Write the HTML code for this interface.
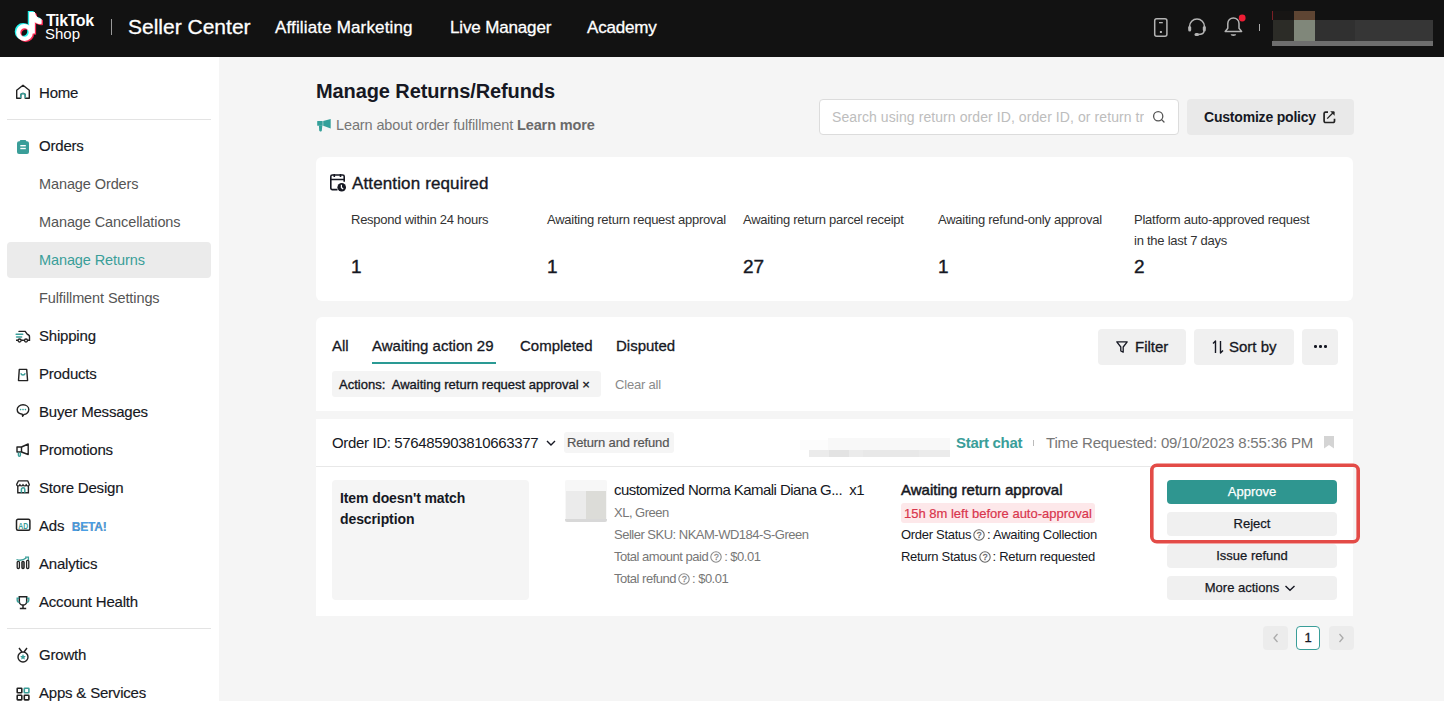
<!DOCTYPE html>
<html><head><meta charset="utf-8">
<style>
*{box-sizing:border-box;margin:0;padding:0}
html,body{width:1444px;height:701px;overflow:hidden;font-family:"Liberation Sans",sans-serif;background:#f5f5f5;color:#161823}
.a{position:absolute;white-space:nowrap}
svg{display:block}
#hdr{position:absolute;left:0;top:0;width:1444px;height:57px;background:#121212}
.nav{position:absolute;white-space:nowrap;color:#fff;font-size:17px;top:18px;-webkit-text-stroke:0.3px #fff}
#side{position:absolute;left:0;top:57px;width:219px;height:644px;background:#fff}
.si{position:absolute;left:39px;font-size:15px;color:#161823;white-space:nowrap;letter-spacing:-0.2px;-webkit-text-stroke:0.15px #161823}
.ss{position:absolute;left:39px;font-size:14.5px;color:#555;white-space:nowrap;letter-spacing:-0.1px}
.ic{position:absolute;left:15px}
.card{position:absolute;background:#fff}
.btn{position:absolute;background:#f0f0f0;border-radius:4px;font-size:13px;text-align:center;color:#161823;white-space:nowrap;-webkit-text-stroke:0.25px #161823}
.lab{position:absolute;font-size:13px;color:#333;white-space:nowrap;line-height:21px;letter-spacing:-0.25px}
.num{position:absolute;font-size:19px;color:#161823;white-space:nowrap;-webkit-text-stroke:0.4px #161823}
.tab{position:absolute;font-size:15px;color:#161823;white-space:nowrap;top:337px;-webkit-text-stroke:0.3px #161823}
.hq{display:inline-block;vertical-align:-2px;margin:0 2px 0 2px}
</style></head>
<body>
<!-- HEADER -->
<div id="hdr">
  <svg class="a" style="left:10px;top:8.7px" width="36" height="38" viewBox="10 8 36 38">
    
    <g fill="#25f4ee" stroke="#25f4ee" transform="translate(-1.4,-1)">
        <circle cx="24.5" cy="31.5" r="6.3" fill="none" stroke-width="4.2"/>
        <rect x="29.7" y="11.5" width="4.6" height="20.5"/>
        <path d="M33.5 11.5h1c0.5 3.6 3.2 6.3 6.6 6.6v4.6c-2.8 0-5.2-0.9-7.2-2.4z"/>
      </g>
    <g fill="#fe2c55" stroke="#fe2c55" transform="translate(1.3,1.1)">
        <circle cx="24.5" cy="31.5" r="6.3" fill="none" stroke-width="4.2"/>
        <rect x="29.7" y="11.5" width="4.6" height="20.5"/>
        <path d="M33.5 11.5h1c0.5 3.6 3.2 6.3 6.6 6.6v4.6c-2.8 0-5.2-0.9-7.2-2.4z"/>
      </g>
    <g fill="#fff" stroke="#fff">
        <circle cx="24.5" cy="31.5" r="6.3" fill="none" stroke-width="4.2"/>
        <rect x="29.7" y="11.5" width="4.6" height="20.5"/>
        <path d="M33.5 11.5h1c0.5 3.6 3.2 6.3 6.6 6.6v4.6c-2.8 0-5.2-0.9-7.2-2.4z"/>
      </g>
  </svg>
  <div class="a" style="left:46px;top:12px;color:#fff;font-size:16px;font-weight:bold;letter-spacing:-0.4px">TikTok</div>
  <div class="a" style="left:45px;top:25px;color:#fff;font-size:15px">Shop</div>
  <div class="a" style="left:111px;top:19px;width:1px;height:16px;background:#999"></div>
  <div class="a" style="left:128px;top:15px;color:#fff;font-size:21px;-webkit-text-stroke:0.3px #fff">Seller Center</div>
  <div class="nav" style="left:275px;letter-spacing:0.15px">Affiliate Marketing</div>
  <div class="nav" style="left:450px;letter-spacing:-0.15px">Live Manager</div>
  <div class="nav" style="left:587px;letter-spacing:-0.2px">Academy</div>
  <!-- right icons -->
  <svg class="a" style="left:1152px;top:17px" width="18" height="22" viewBox="0 0 18 22">
    <rect x="2.7" y="1.7" width="12.2" height="17.6" rx="2" fill="none" stroke="#b4b4b4" stroke-width="1.5"/>
    <rect x="7" y="5" width="3.8" height="1.3" fill="#b4b4b4"/>
    <rect x="7.9" y="14" width="2" height="2" fill="#b4b4b4"/>
  </svg>
  <svg class="a" style="left:1186px;top:17px" width="22" height="20" viewBox="0 0 22 20">
    <path d="M3.5 12V9.5a7.5 7.5 0 0 1 15 0V12" fill="none" stroke="#b4b4b4" stroke-width="1.5"/>
    <rect x="2.2" y="9" width="3" height="5.5" rx="1.5" fill="#b4b4b4"/>
    <rect x="16.8" y="9" width="3" height="5.5" rx="1.5" fill="#b4b4b4"/>
    <path d="M18 14c0 2.6-2.5 3.5-6 3.5" fill="none" stroke="#b4b4b4" stroke-width="1.5"/>
    <rect x="8.5" y="16" width="4.5" height="3" rx="1.5" fill="#b4b4b4"/>
  </svg>
  <svg class="a" style="left:1222px;top:12px" width="26" height="26" viewBox="0 0 26 26">
    <path d="M3.2 19.5h16.4l-2.6-3.2V11.5a5.6 5.6 0 0 0-11.2 0v4.8z" fill="none" stroke="#b4b4b4" stroke-width="1.5" stroke-linejoin="round"/>
    <path d="M8.6 22.3h5.6a2.8 1.6 0 0 1-5.6 0z" fill="#b4b4b4"/>
    <circle cx="20.2" cy="6" r="3.4" fill="#ee1d34"/>
  </svg>
  <div class="a" style="left:1259px;top:24px;width:1px;height:7px;background:#aaa"></div>
  <!-- blurred profile -->
  <div class="a" style="left:1272px;top:11px;width:1px;height:9px;background:#7a1f25"></div>
  <div class="a" style="left:1273px;top:11px;width:21px;height:9px;background:#171514"></div>
  <div class="a" style="left:1294px;top:11px;width:21px;height:9px;background:#5e4533"></div>
  <div class="a" style="left:1273px;top:20px;width:21px;height:21px;background:#2c2c27"></div>
  <div class="a" style="left:1294px;top:20px;width:21px;height:21px;background:#80877a"></div>
  <div class="a" style="left:1315px;top:20px;width:40px;height:21px;background:#303030"></div>
  <div class="a" style="left:1355px;top:20px;width:78px;height:21px;background:#363636"></div>
  <div class="a" style="left:1272px;top:41px;width:161px;height:5px;background:#6e6e6e"></div>
</div>

<!-- SIDEBAR -->
<div id="side"></div>
<div class="a" style="left:7px;top:119px;width:204px;height:1px;background:#e3e3e3"></div>
<div class="a" style="left:7px;top:628px;width:204px;height:1px;background:#e3e3e3"></div>
<div class="a" style="left:7px;top:242px;width:204px;height:36px;background:#ebebeb;border-radius:4px"></div>

<!-- icons -->
<svg class="ic" style="top:84px" width="16" height="16" viewBox="0 0 16 16">
  <path d="M1.7 14.3V6.3L8 1.2l6.3 5.1v8H10.3v-2.6a2.3 2.3 0 0 0-4.6 0v2.6z" fill="none" stroke="#222" stroke-width="1.4" stroke-linejoin="round"/>
  <path d="M5.7 14.3v-2.6a2.3 2.3 0 0 1 4.6 0v2.6" fill="none" stroke="#3a9e99" stroke-width="1.5"/>
</svg>
<svg class="ic" style="top:139px" width="16" height="16" viewBox="0 0 16 16">
  <rect x="2" y="2.3" width="12" height="12.7" rx="2" fill="#3a9e99"/><rect x="4.8" y="1" width="6.4" height="3" rx="1" fill="#3a9e99"/>
  <rect x="5.3" y="6" width="5.5" height="1.4" fill="#fff"/>
  <rect x="5.3" y="8.8" width="5.5" height="1.4" fill="#fff"/>
</svg>
<svg class="ic" style="top:329px" width="16" height="16" viewBox="0 0 16 16">
  <path d="M4 2.4h6.2l2 2.8c1.4 0.3 2.3 1.2 2.3 2.6v3.4h-1.2M8.5 11.3h-2.3" fill="none" stroke="#222" stroke-width="1.4" stroke-linecap="round"/>
  <path d="M1.2 5.3h6.5M1.6 8h5" stroke="#3a9e99" stroke-width="1.6" stroke-linecap="round"/>
  <path d="M1 11.3h2" stroke="#222" stroke-width="1.4"/>
  <circle cx="4.6" cy="11.5" r="1.5" fill="#fff" stroke="#222" stroke-width="1.3"/>
  <circle cx="11" cy="11.5" r="1.5" fill="#fff" stroke="#222" stroke-width="1.3"/>
</svg>
<svg class="ic" style="top:367px" width="16" height="16" viewBox="0 0 16 16">
  <path d="M4.3 2.4h7.4l0.9 11.2H3.5z" fill="none" stroke="#222" stroke-width="1.4" stroke-linejoin="round"/>
  <path d="M5.8 6.2c0.7 2.3 3.7 2.3 4.4 0" fill="none" stroke="#3a9e99" stroke-width="1.4"/>
</svg>
<svg class="ic" style="top:403px" width="16" height="16" viewBox="0 0 16 16">
  <path d="M8 1.8c3.3 0 5.8 2.1 5.8 4.8S11.3 11.3 9 11.4L7.6 13.2 7.3 11.3C4.4 11 2.2 9.2 2.2 6.6 2.2 3.9 4.7 1.8 8 1.8z" fill="none" stroke="#222" stroke-width="1.4" stroke-linejoin="round"/>
  <circle cx="5.6" cy="6.6" r="0.8" fill="#3a9e99"/><circle cx="8" cy="6.6" r="0.8" fill="#3a9e99"/><circle cx="10.4" cy="6.6" r="0.8" fill="#3a9e99"/>
</svg>
<svg class="ic" style="top:442px" width="16" height="16" viewBox="0 0 16 16">
  <path d="M2 5h4.5l6.7-3v10.5L6.5 10H2z" fill="none" stroke="#222" stroke-width="1.4" stroke-linejoin="round"/>
  <path d="M6.5 5v5" stroke="#222" stroke-width="1.4"/>
  <path d="M3.4 10.4v2.8a1 1 0 0 0 2 0v-2.8" fill="none" stroke="#3a9e99" stroke-width="1.4"/>
</svg>
<svg class="ic" style="top:479px" width="16" height="16" viewBox="0 0 16 16">
  <path d="M3.5 1.8h9.2l1.6 3.6c0 1-0.8 1.5-1.6 1.5s-1.5-0.5-1.5-1.5c0 1-0.8 1.5-1.6 1.5S8 6.4 8 5.4C8 6.4 7.3 6.9 6.4 6.9S4.9 6.4 4.9 5.4c0 1-0.8 1.5-1.6 1.5S1.7 6.4 1.7 5.4z" fill="none" stroke="#222" stroke-width="1.3" stroke-linejoin="round"/>
  <path d="M2.8 7v6.8h10.6V7" fill="none" stroke="#222" stroke-width="1.4"/>
  <path d="M6.4 13.8V10.5a1.7 1.7 0 0 1 3.4 0v3.3" fill="none" stroke="#3a9e99" stroke-width="1.5"/>
</svg>
<svg class="ic" style="top:517px" width="16" height="16" viewBox="0 0 16 16">
  <rect x="1.5" y="2.3" width="13.4" height="11" rx="1.5" fill="none" stroke="#222" stroke-width="1.5"/>
  <text x="8.2" y="11.6" font-family="Liberation Sans" font-weight="bold" font-size="8.6" fill="#3a9e99" text-anchor="middle" textLength="10" lengthAdjust="spacingAndGlyphs">AD</text>
</svg>
<svg class="ic" style="top:555px" width="16" height="16" viewBox="0 0 16 16">
  <path d="M1.5 4.5c3 1.2 6.5 1 10-1.8" fill="none" stroke="#3a9e99" stroke-width="1.3"/>
  <path d="M10 2.2h3.4v3" fill="none" stroke="#3a9e99" stroke-width="1.3"/>
  <rect x="2.2" y="6.3" width="2.2" height="7.2" rx="1" fill="none" stroke="#222" stroke-width="1.3"/>
  <rect x="6.9" y="6.3" width="2.2" height="7.2" rx="1" fill="#888" stroke="#222" stroke-width="1.3"/>
  <rect x="11.6" y="5.3" width="2.2" height="8.2" rx="1" fill="none" stroke="#222" stroke-width="1.3"/>
</svg>
<svg class="ic" style="top:595px" width="16" height="16" viewBox="0 0 16 16">
  <path d="M4.3 1.8h7.4v4.6a3.7 3.7 0 0 1-7.4 0z" fill="none" stroke="#222" stroke-width="1.5"/>
  <path d="M4.2 3.2H2.2v1.8c0 1.3 1 2.2 2.2 2.3M11.8 3.2h2v1.8c0 1.3-1 2.2-2.2 2.3" fill="none" stroke="#3a9e99" stroke-width="1.4"/>
  <path d="M8 10v3.3M4.8 13.5h6.4" stroke="#222" stroke-width="1.5"/>
</svg>
<svg class="ic" style="top:647px" width="16" height="16" viewBox="0 0 16 16">
  <path d="M4 1l3 4M12 1L9 5" stroke="#222" stroke-width="1.4"/>
  <circle cx="8" cy="10" r="5" fill="none" stroke="#222" stroke-width="1.4"/>
  <path d="M8 7l0.9 1.9 2 0.2-1.5 1.4 0.4 2L8 11.5l-1.8 1 0.4-2-1.5-1.4 2-0.2z" fill="#3a9e99"/>
</svg>
<svg class="ic" style="top:686px" width="16" height="16" viewBox="0 0 16 16">
  <rect x="2.2" y="2.2" width="4.6" height="4.6" rx="0.6" fill="none" stroke="#222" stroke-width="1.6"/>
  <rect x="9.3" y="2.2" width="4.6" height="4.6" rx="0.6" fill="none" stroke="#3a9e99" stroke-width="1.6"/>
  <rect x="2.2" y="9.3" width="4.6" height="4.6" rx="0.6" fill="none" stroke="#222" stroke-width="1.6"/>
  <rect x="9.3" y="9.3" width="4.6" height="4.6" rx="0.6" fill="none" stroke="#222" stroke-width="1.6"/>
</svg>

<div class="si" style="top:84px">Home</div>
<div class="si" style="top:137px">Orders</div>
<div class="ss" style="top:176px">Manage Orders</div>
<div class="ss" style="top:214px">Manage Cancellations</div>
<div class="ss" style="top:252px;color:#3a9e99">Manage Returns</div>
<div class="ss" style="top:290px">Fulfillment Settings</div>
<div class="si" style="top:327px">Shipping</div>
<div class="si" style="top:365px">Products</div>
<div class="si" style="top:403px">Buyer Messages</div>
<div class="si" style="top:441px">Promotions</div>
<div class="si" style="top:479px">Store Design</div>
<div class="si" style="top:517px">Ads <span style="color:#4a9fe8;font-weight:bold;font-size:12px;margin-left:3.5px;letter-spacing:-0.2px">BETA!</span></div>
<div class="si" style="top:555px">Analytics</div>
<div class="si" style="top:593px">Account Health</div>
<div class="si" style="top:646px">Growth</div>
<div class="si" style="top:684px">Apps &amp; Services</div>

<!-- MAIN -->
<div class="a" style="left:316px;top:80px;font-size:20px;font-weight:bold;letter-spacing:-0.1px">Manage Returns/Refunds</div>
<svg class="a" style="left:316px;top:117px" width="16" height="16" viewBox="0 0 16 16">
  <rect x="1.2" y="4" width="5.5" height="4.8" rx="0.5" fill="#35a09a"/>
  <path d="M7.2 4.1L14.7 2v9.6L7.2 8.8z" fill="#35a09a"/>
  <path d="M2.9 8.6h3.4l-0.5 5.1a1 1 0 0 1-1 0.7h-0.6a1 1 0 0 1-1-0.8z" fill="#35a09a"/>
</svg>
<div class="a" style="left:336px;top:117px;font-size:14.5px;color:#777;letter-spacing:-0.12px">Learn about order fulfillment <b style="color:#6a6a6a">Learn more</b></div>

<div class="a" style="left:819px;top:99px;width:360px;height:36px;background:#fff;border:1px solid #dcdcdc;border-radius:4px"></div>
<div class="a" style="left:832px;top:109px;font-size:14px;color:#bdbdbd;width:312px;overflow:hidden;letter-spacing:0.08px">Search using return order ID, order ID, or return tracking ID</div>
<svg class="a" style="left:1152px;top:110.3px" width="14" height="14" viewBox="0 0 14 14">
  <circle cx="6.2" cy="6.2" r="4.6" fill="none" stroke="#555" stroke-width="1.3"/>
  <path d="M9.6 9.6l2.4 2.4" stroke="#555" stroke-width="1.3" stroke-linecap="round"/>
</svg>
<div class="a" style="left:1187px;top:99px;width:167px;height:36px;background:#e9e9e9;border-radius:4px"></div>
<div class="a" style="left:1204px;top:109px;font-size:14px;font-weight:bold;letter-spacing:-0.2px">Customize policy</div>
<svg class="a" style="left:1322px;top:110px" width="14" height="14" viewBox="0 0 14 14">
  <path d="M6 2.1H3.6a1.5 1.5 0 0 0-1.5 1.5v7.4a1.5 1.5 0 0 0 1.5 1.5h7.4a1.5 1.5 0 0 0 1.5-1.5V8.7" fill="none" stroke="#222" stroke-width="1.7"/>
  <path d="M5.2 8.6L10.8 3" stroke="#222" stroke-width="1.3"/>
  <path d="M8.2 1.3h3.4a1 1 0 0 1 1 1v3.4z" fill="#222"/>
</svg>

<!-- Attention card -->
<div class="card" style="left:316px;top:157px;width:1037px;height:143.5px;border-radius:6px"></div>
<svg class="a" style="left:329px;top:173px" width="19" height="20" viewBox="0 0 19 20">
  <path d="M8.5 16.6H3.3a1.5 1.5 0 0 1-1.5-1.5V3.5A1.5 1.5 0 0 1 3.3 2h10.4a1.5 1.5 0 0 1 1.5 1.5V8.8" fill="none" stroke="#161823" stroke-width="1.6" stroke-linejoin="round"/>
  <path d="M1.8 6.5h13.4M5.3 0.9v3.2M11.5 0.9v3.2" stroke="#161823" stroke-width="1.6"/>
  <circle cx="12.7" cy="14.2" r="4.3" fill="#161823"/>
  <path d="M12.4 11.8v2.8l1.8 1.3" fill="none" stroke="#fff" stroke-width="1.2"/>
</svg>
<div class="a" style="left:352px;top:174px;font-size:17px;-webkit-text-stroke:0.35px #161823;letter-spacing:0.13px">Attention required</div>
<div class="lab" style="left:351px;top:209px">Respond within 24 hours</div>
<div class="lab" style="left:547px;top:209px">Awaiting return request approval</div>
<div class="lab" style="left:743px;top:209px">Awaiting return parcel receipt</div>
<div class="lab" style="left:938px;top:209px">Awaiting refund-only approval</div>
<div class="lab" style="left:1134px;top:209px">Platform auto-approved request<br>in the last 7 days</div>
<div class="num" style="left:351px;top:256px">1</div>
<div class="num" style="left:547px;top:256px">1</div>
<div class="num" style="left:743px;top:256px">27</div>
<div class="num" style="left:938px;top:256px">1</div>
<div class="num" style="left:1134px;top:256px">2</div>

<!-- Tabs card -->
<div class="card" style="left:316px;top:317px;width:1037px;height:94px;border-radius:6px 6px 0 0"></div>
<div class="tab" style="left:332px">All</div>
<div class="tab" style="left:372px">Awaiting action 29</div>
<div class="a" style="left:372px;top:362px;width:124px;height:2px;background:#2a9a94"></div>
<div class="tab" style="left:520px">Completed</div>
<div class="tab" style="left:616px">Disputed</div>
<div class="btn" style="left:1098px;top:329px;width:88px;height:36px"></div>
<svg class="a" style="left:1115px;top:340px" width="14" height="14" viewBox="0 0 14 14">
  <path d="M1.8 1.8h10.4L8.2 7v5.2L5.8 11V7z" fill="none" stroke="#161823" stroke-width="1.3" stroke-linejoin="round"/>
</svg>
<div class="a" style="left:1135px;top:338px;font-size:15px;-webkit-text-stroke:0.3px #161823">Filter</div>
<div class="btn" style="left:1194px;top:329px;width:100px;height:36px"></div>
<svg class="a" style="left:1211px;top:339px" width="14" height="16" viewBox="0 0 14 16">
  <path d="M4.5 14V2L2 4.5M9.5 2v12L12 11.5" fill="none" stroke="#161823" stroke-width="1.4" stroke-linejoin="round"/>
</svg>
<div class="a" style="left:1229px;top:338px;font-size:15px;-webkit-text-stroke:0.3px #161823">Sort by</div>
<div class="btn" style="left:1302px;top:329px;width:36px;height:36px"></div>
<div class="a" style="left:1314px;top:345px;width:2.5px;height:2.5px;background:#161823;border-radius:50%"></div>
<div class="a" style="left:1319px;top:345px;width:2.5px;height:2.5px;background:#161823;border-radius:50%"></div>
<div class="a" style="left:1324px;top:345px;width:2.5px;height:2.5px;background:#161823;border-radius:50%"></div>
<div class="a" style="left:332px;top:371px;width:269px;height:26px;background:#f4f4f4;border-radius:3px"></div>
<div class="a" style="left:339px;top:377px;font-size:13px;-webkit-text-stroke:0.35px #161823;letter-spacing:0px">Actions:&nbsp; Awaiting return request approval ×</div>
<div class="a" style="left:615px;top:377px;font-size:13px;color:#8a8a8a;letter-spacing:-0.2px">Clear all</div>

<!-- Order card -->
<div class="card" style="left:316px;top:419px;width:1037px;height:197px"></div>
<div class="a" style="left:316px;top:466px;width:1037px;height:1px;background:#e8e8e8"></div>
<div class="a" style="left:332px;top:434px;font-size:15px;letter-spacing:-0.35px">Order ID: 576485903810663377</div>
<svg class="a" style="left:545px;top:437px" width="12" height="12" viewBox="0 0 12 12">
  <path d="M2 4l4 4 4-4" fill="none" stroke="#161823" stroke-width="1.4"/>
</svg>
<div class="a" style="left:564px;top:432px;width:110px;height:21px;background:#f5f5f5;border-radius:3px"></div>
<div class="a" style="left:567px;top:435px;font-size:13px;color:#555;-webkit-text-stroke:0.2px #555;letter-spacing:-0.15px">Return and refund</div>
<!-- blurred name -->
<div class="a" style="left:800px;top:440px;width:28px;height:10px;background:#fcfcfc"></div><div class="a" style="left:828px;top:438px;width:122px;height:12px;background:#f8f8f8"></div>
<div class="a" style="left:809px;top:450px;width:141px;height:6.5px;background:#ebebeb"></div>
<div class="a" style="left:829px;top:450px;width:20px;height:6.5px;background:#e3e3e3"></div><div class="a" style="left:863px;top:450px;width:56px;height:6.5px;background:#e8e8e8"></div>
<div class="a" style="left:956px;top:434px;font-size:15px;font-weight:bold;color:#3a9e99;letter-spacing:-0.3px">Start chat</div>
<div class="a" style="left:1033px;top:440px;width:1px;height:6px;background:#bbb"></div>
<div class="a" style="left:1046px;top:434px;font-size:15px;color:#777;letter-spacing:-0.18px">Time Requested: 09/10/2023 8:55:36 PM</div>
<svg class="a" style="left:1323px;top:435px" width="12" height="14" viewBox="0 0 12 14">
  <path d="M1 1h10v12.5L6 10l-5 3.5z" fill="#d4d4d4"/>
</svg>

<div class="a" style="left:332px;top:480px;width:197px;height:120px;background:#f5f5f5;border-radius:4px"></div>
<div class="a" style="left:340px;top:488px;font-size:14px;font-weight:bold;line-height:21px;letter-spacing:-0.1px">Item doesn't match<br>description</div>
<div class="a" style="left:565px;top:480px;width:42px;height:42px;background:#f7f7f7;border-radius:2px;overflow:hidden">
  <div class="a" style="left:1px;top:11px;width:20px;height:29px;background:#ebebeb"></div>
  <div class="a" style="left:21px;top:11px;width:20px;height:29px;background:#dcdcd8"></div>
  <div class="a" style="left:0;top:39px;width:42px;height:3px;background:#d8d8d8"></div>
</div>
<div class="a" style="left:614px;top:481px;font-size:15px;letter-spacing:-0.55px">customized Norma Kamali Diana G...&nbsp; x1</div>
<div class="a" style="left:614px;top:502px;font-size:13px;color:#777;line-height:22px;letter-spacing:-0.5px">XL, Green<br>Seller SKU: NKAM-WD184-S-Green<br>Total amount paid<svg class="hq" width="12" height="12" viewBox="0 0 12 12"><circle cx="6" cy="6" r="5.2" fill="none" stroke="#8a8a8a" stroke-width="1.1"/><text x="6" y="9" font-size="8.5" text-anchor="middle" fill="#8a8a8a" stroke="#8a8a8a" stroke-width="0.3" font-family="Liberation Sans">?</text></svg>: $0.01<br>Total refund<svg class="hq" width="12" height="12" viewBox="0 0 12 12"><circle cx="6" cy="6" r="5.2" fill="none" stroke="#8a8a8a" stroke-width="1.1"/><text x="6" y="9" font-size="8.5" text-anchor="middle" fill="#8a8a8a" stroke="#8a8a8a" stroke-width="0.3" font-family="Liberation Sans">?</text></svg>: $0.01</div>

<div class="a" style="left:901px;top:481px;font-size:15px;-webkit-text-stroke:0.5px #161823;letter-spacing:0px">Awaiting return approval</div>
<div class="a" style="left:901px;top:503px;width:194px;height:20px;background:#fde8ea;border-radius:3px"></div>
<div class="a" style="left:904px;top:506px;font-size:13px;color:#d9364d;-webkit-text-stroke:0.2px #d9364d">15h 8m left before auto-approval</div>
<div class="a" style="left:901px;top:524px;font-size:13px;line-height:22px;letter-spacing:-0.3px">Order Status<svg class="hq" width="12" height="12" viewBox="0 0 12 12"><circle cx="6" cy="6" r="5.2" fill="none" stroke="#666" stroke-width="1.1"/><text x="6" y="9" font-size="8.5" text-anchor="middle" fill="#666" stroke="#666" stroke-width="0.3" font-family="Liberation Sans">?</text></svg>: Awaiting Collection<br>Return Status<svg class="hq" width="12" height="12" viewBox="0 0 12 12"><circle cx="6" cy="6" r="5.2" fill="none" stroke="#666" stroke-width="1.1"/><text x="6" y="9" font-size="8.5" text-anchor="middle" fill="#666" stroke="#666" stroke-width="0.3" font-family="Liberation Sans">?</text></svg>: Return requested</div>

<div class="btn" style="left:1167px;top:480px;width:170px;height:24px;line-height:24px;background:#2f9690;color:#fff;-webkit-text-stroke:0.25px #fff">Approve</div>
<div class="btn" style="left:1167px;top:512px;width:170px;height:24px;line-height:24px">Reject</div>
<div class="btn" style="left:1167px;top:544px;width:170px;height:24px;line-height:24px">Issue refund</div>
<div class="btn" style="left:1167px;top:576px;width:170px;height:24px;line-height:24px;text-indent:-20px">More actions</div>
<svg class="a" style="left:1283.5px;top:582px" width="12" height="12" viewBox="0 0 12 12">
  <path d="M1.5 4l4.5 4.2L10.5 4" fill="none" stroke="#161823" stroke-width="1.4"/>
</svg>
<svg class="a" style="left:1148px;top:461px" width="214" height="85" viewBox="0 0 214 85"><rect x="3.8" y="4.3" width="206.4" height="76.4" rx="5" fill="none" stroke="#e34b47" stroke-width="3.6"/></svg>

<!-- pagination -->
<div class="a" style="left:1263px;top:626px;width:25px;height:24px;background:#ececec;border-radius:4px"></div>
<svg class="a" style="left:1269.5px;top:632px" width="12" height="12" viewBox="0 0 12 12"><path d="M7.5 2L4 6l3.5 4" fill="none" stroke="#aaa" stroke-width="1.3"/></svg>
<div class="a" style="left:1296px;top:626px;width:24px;height:24px;background:#fff;border:1px solid #3a9e99;border-radius:4px;font-size:13px;text-align:center;line-height:22px;-webkit-text-stroke:0.3px #161823">1</div>
<div class="a" style="left:1328.5px;top:626px;width:25px;height:24px;background:#ececec;border-radius:4px"></div>
<svg class="a" style="left:1335px;top:632px" width="12" height="12" viewBox="0 0 12 12"><path d="M4.5 2L8 6l-3.5 4" fill="none" stroke="#aaa" stroke-width="1.3"/></svg>
</body></html>
